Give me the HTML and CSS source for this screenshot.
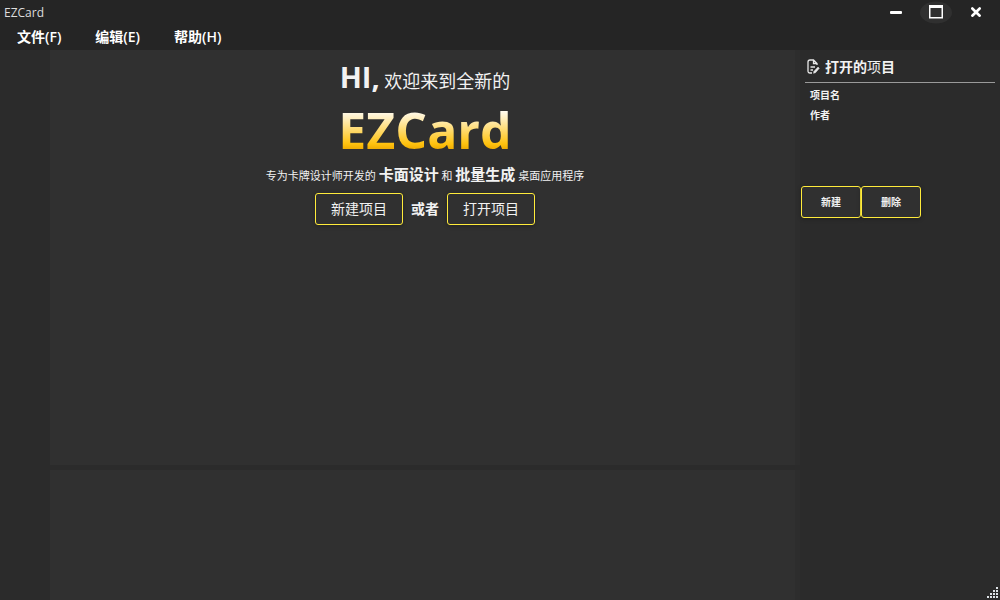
FILE: index.html
```html
<!DOCTYPE html>
<html lang="zh-CN">
<head>
<meta charset="utf-8">
<title>EZCard</title>
<link rel="stylesheet" href="styles.css">
</head>
<body>
<div class="app">
  <header class="top">
    <div class="titlebar">
      <span class="app-name">EZCard</span>
      <div class="window-controls">
        <button class="win-btn" aria-label="最小化"><svg width="32" height="24" viewBox="0 0 32 24"><rect x="10" y="11" width="12" height="3" rx="1" fill="#fff"/></svg></button>
        <button class="win-btn" aria-label="最大化"><svg width="32" height="24" viewBox="0 0 32 24"><ellipse cx="16" cy="12.5" rx="16" ry="11" fill="#303030"/><path fill="#fff" fill-rule="evenodd" d="M9 5h14v13.500H9zM10.500 8v9h11V8z"/></svg></button>
        <button class="win-btn" aria-label="关闭"><svg width="32" height="24" viewBox="0 0 32 24"><path d="M12.300 8.500L19.700 15.700M19.700 8.500L12.300 15.700" stroke="#fff" stroke-width="2.600" stroke-linecap="round"/></svg></button>
      </div>
    </div>
    <nav class="menu">
      <button class="menu-item">文件(F)</button>
      <button class="menu-item">编辑(E)</button>
      <button class="menu-item">帮助(H)</button>
    </nav>
  </header>
  <div class="workspace">
    <div class="rail"></div>
    <div class="center">
      <main class="welcome">
        <p class="greeting"><strong>HI,</strong> 欢迎来到全新的</p>
        <h1 class="brand">EZCard</h1>
        <p class="tagline">专为卡牌设计师开发的 <strong>卡面设计</strong> 和 <strong>批量生成</strong> 桌面应用程序</p>
        <div class="actions">
          <button class="btn">新建项目</button>
          <span class="or">或者</span>
          <button class="btn">打开项目</button>
        </div>
      </main>
      <section class="output"></section>
    </div>
    <aside class="panel">
      <h2 class="panel-title">
        <svg width="13" height="16" viewBox="0 0 13 16" fill="none" stroke="#e8e8e8" stroke-width="1.300"><path d="M5 15H3Q1 15 1 13V4Q1 2 3 2H6.500L10 5.500V7M6.500 2V5.500H10M3.500 9H8M3.500 12H6"/><path d="M6.500 15.300L7 13.300L11 9L12.300 10.300L8.500 14.700Z" fill="#e8e8e8" stroke-width=".5"/></svg>
        <span>打开的<span class="light">项</span>目</span>
      </h2>
      <dl class="fields">
        <dt>项目名</dt>
        <dt>作者</dt>
      </dl>
      <div class="panel-actions">
        <button class="btn small">新建</button>
        <button class="btn small">删除</button>
      </div>
      <svg class="grip" width="12" height="12" viewBox="0 0 12 12" fill="#dde2e6"><path d="M9 0h2v2H9zM6 3h2v2H6zM9 3h2v2H9zM3 6h2v2H3zM6 6h2v2H6zM9 6h2v2H9zM0 9h2v2H0zM3 9h2v2H3zM6 9h2v2H6zM9 9h2v2H9z"/></svg>
    </aside>
  </div>
</div>
</body>
</html>
```

FILE: styles.css
```css
* { box-sizing: border-box; }
body {
  margin: 0;
  background: #2b2b2b;
  color: #f2f2f2;
  font-family: "Open Sans", "Noto Sans CJK SC", sans-serif;
}
button { font: inherit; color: inherit; background: none; border: 0; padding: 0; }
p, h1, h2, dl { margin: 0; }
.app { min-height: 100vh; display: flex; flex-direction: column; }
.top { background: #252525; height: 50px; }
.titlebar { display: flex; justify-content: space-between; height: 24px; }
.app-name { padding-left: 4px; font-size: 12px; line-height: 26px; color: #ddd; }
.window-controls { display: flex; gap: 8px; padding-right: 8px; }
.win-btn { width: 32px; height: 24px; }
.win-btn svg { display: block; }
.menu { display: flex; gap: 34px; padding-left: 17px; }
.menu-item { font-size: 14px; line-height: 26px; font-weight: 600; color: #fff; }
.workspace { flex: 1; display: grid; grid-template-columns: 50px 1fr 200px; }
.center {
  display: grid;
  grid-template-rows: 1fr 130px;
  gap: 5px;
  background: #2b2b2b;
}
.welcome, .output { background: #303030; border-right: 5px solid #2d2d2d; }
.welcome { display: flex; flex-direction: column; align-items: center; padding: 7px 0 0 5px; }
.greeting { font-size: 18px; line-height: 40px; }
.greeting strong { font-size: 29px; }
.brand {
  font-size: 50px;
  line-height: 58px;
  font-weight: 700;
  background: linear-gradient(#fff 14%, #ffc20e 74%, #e9a400 86%);
  background-clip: text;
  -webkit-background-clip: text;
  color: transparent;
}
.tagline { font-size: 11px; line-height: 24px; padding-top: 3px; }
.tagline strong { font-size: 15px; }
.actions { display: flex; align-items: center; gap: 8px; margin-top: 5px; }
.btn {
  width: 88px;
  height: 32px;
  border: 1px solid #ffeb3b;
  border-radius: 3px;
  background: #303030;
  font-size: 14px;
  line-height: 20px;
  box-shadow: 0 1px 4px #0004;
}
.or { font-size: 14px; line-height: 20px; font-weight: 700; }
.panel { position: relative; background: #2b2b2b; }
.panel-title {
  display: flex;
  align-items: center;
  gap: 5px;
  height: 33px;
  margin: 0 5px;
  padding-left: 2px;
  border-bottom: 1px solid #9a9a9a;
  font-size: 14px;
  font-weight: 700;
}
.light { font-weight: 400; }
.fields { padding: 2px 10px 0; font-size: 10px; line-height: 20px; font-weight: 700; }
.panel-actions { display: flex; padding: 61px 1px 0; }
.btn.small { width: 60px; font-size: 10px; font-weight: 700; }
.grip { position: absolute; right: 1px; bottom: 1px; }
```
